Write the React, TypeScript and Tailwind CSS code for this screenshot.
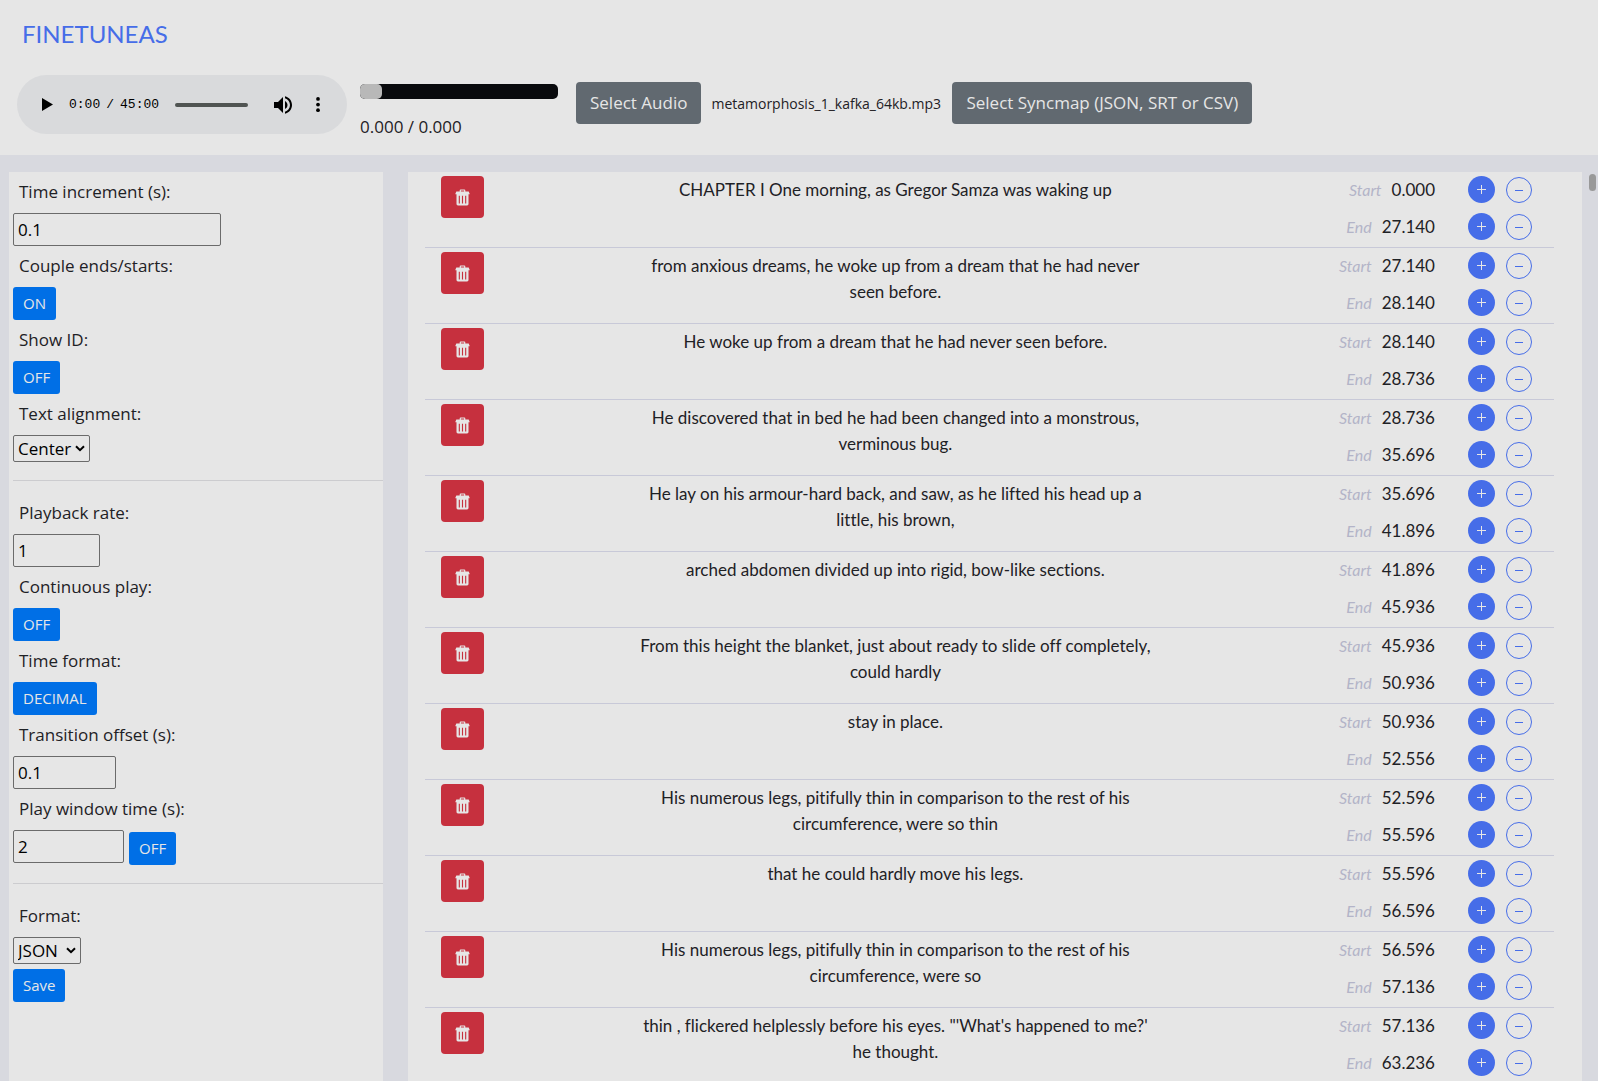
import { useState } from "react";

const rows = [
  { text: "CHAPTER I One morning, as Gregor Samza was waking up", start: "0.000", end: "27.140" },
  { text: "from anxious dreams, he woke up from a dream that he had never seen before.", start: "27.140", end: "28.140" },
  { text: "He woke up from a dream that he had never seen before.", start: "28.140", end: "28.736" },
  { text: "He discovered that in bed he had been changed into a monstrous, verminous bug.", start: "28.736", end: "35.696" },
  { text: "He lay on his armour-hard back, and saw, as he lifted his head up a little, his brown,", start: "35.696", end: "41.896" },
  { text: "arched abdomen divided up into rigid, bow-like sections.", start: "41.896", end: "45.936" },
  { text: "From this height the blanket, just about ready to slide off completely, could hardly", start: "45.936", end: "50.936" },
  { text: "stay in place.", start: "50.936", end: "52.556" },
  { text: "His numerous legs, pitifully thin in comparison to the rest of his circumference, were so thin", start: "52.596", end: "55.596" },
  { text: "that he could hardly move his legs.", start: "55.596", end: "56.596" },
  { text: "His numerous legs, pitifully thin in comparison to the rest of his circumference, were so", start: "56.596", end: "57.136" },
  { text: "thin , flickered helplessly before his eyes. \"'What's happened to me?' he thought.", start: "57.136", end: "63.236" },
];

const labelClass = "block h-[41px] pt-[6px] pl-[6px] leading-[27px]";
const inputClass = "block h-[33px] rounded-[2px] border border-[#6b6b6b] bg-transparent px-1 text-black outline-none";
const buttonClass = "block h-[33px] rounded-[3px] bg-[#006fe6] px-[10px] text-[15px] text-[#e6e6e6]";
const fileButtonClass = "h-[42px] rounded bg-[#616970] px-[14px] text-[17px] text-[#e6e6e6]";

const TrashIcon = () => (
  <svg viewBox="0 0 16 18" className="h-[17px] w-[15px]" fill="currentColor" aria-hidden="true">
    <path
      fillRule="evenodd"
      d="M5 2.5V1.4Q5 .5 6 .5h4q1 0 1 .9v1.1h3.6l1 2.4v.6H.4v-.6l1-2.400zM6.300 2.500h3.400V1.600H6.300zM1.600 5.500h12.800V16q0 1.500-1.500 1.500H3.100Q1.600 17.500 1.600 16zM4 7v8.500h1.200V7zm3.400 0v8.500h1.200V7zm3.400 0v8.500H12V7z"
    />
  </svg>
);

const Select = ({ id, options, className }: { id: string; options: string[]; className: string }) => (
  <div className={`relative ${className}`}>
    <select
      id={id}
      className="block h-[27px] w-full appearance-none rounded-[2px] border border-[#6b6b6b] bg-transparent pl-1 text-black outline-none"
    >
      {options.map((o) => (
        <option key={o}>{o}</option>
      ))}
    </select>
    <svg viewBox="0 0 10 7" className="pointer-events-none absolute top-[10px] right-[5px] h-[7px] w-[10px]" fill="none">
      <path d="M1 1.200l4 4 4-4" stroke="#000" strokeWidth="2" />
    </svg>
  </div>
);

const Toggle = ({ id, on = "ON", off = "OFF", initial = false }: { id: string; on?: string; off?: string; initial?: boolean }) => {
  const [active, setActive] = useState(initial);
  return (
    <button id={id} className={buttonClass} onClick={() => setActive(!active)}>
      {active ? on : off}
    </button>
  );
};

const AudioPlayer = () => (
  <div className="flex h-[59px] w-[330px] items-center rounded-full bg-[#d9dadc] pr-[25px] pl-[25px] text-black">
    <button aria-label="Play">
      <svg viewBox="0 0 11 13" className="h-[13px] w-[11px]">
        <path d="M0 0l11 6.500L0 13z" />
      </svg>
    </button>
    <div className="ml-4 flex gap-[6px] font-['Liberation_Mono',monospace] text-[13px]">
      <span>0:00</span>
      <span>/</span>
      <span>45:00</span>
    </div>
    <div className="ml-4 h-1 flex-1 rounded-full bg-[#505452]" />
    <button aria-label="Mute" className="ml-[26px]">
      <svg viewBox="3 3 18 18" className="h-[18px] w-[18px]">
        <path d="M3 9v6h4l5 5V4L7 9H3zm13.500 3c0-1.770-1.020-3.290-2.500-4.030v8.050c1.480-.73 2.500-2.250 2.500-4.020zM14 3.230v2.060c2.890.86 5 3.540 5 6.710s-2.110 5.850-5 6.710v2.060c4.010-.91 7-4.490 7-8.770s-2.990-7.860-7-8.770z" />
      </svg>
    </button>
    <button aria-label="More options" className="ml-[22px]">
      <svg viewBox="0 0 4 16" className="h-[15px] w-[8px]">
        <circle cx="2" cy="2" r="2" />
        <circle cx="2" cy="8" r="2" />
        <circle cx="2" cy="14" r="2" />
      </svg>
    </button>
  </div>
);

const TimeLine = ({ label, value }: { label: string; value: string }) => (
  <div className="flex h-[27px] items-center">
    <span className="ml-auto text-[16px] text-[#b3b4c8] italic">{label}</span>
    <span className="ml-[10px]">{value}</span>
    <button
      aria-label={`Increase ${label}`}
      className="ml-[33px] flex h-[27px] w-[27px] items-center justify-center rounded-full bg-[#466de8]"
    >
      <svg viewBox="0 0 9 9" className="h-[9px] w-[9px]" stroke="#e6e6e6">
        <path d="M4.500 0v9M0 4.500h9" />
      </svg>
    </button>
    <button
      aria-label={`Decrease ${label}`}
      className="ml-[11px] flex h-[26px] w-[26px] items-center justify-center rounded-full border border-[#466de8]"
    >
      <svg viewBox="0 0 8 4" className="h-[4px] w-[8px]" stroke="#466de8">
        <path d="M0 2.500h8" />
      </svg>
    </button>
  </div>
);

const Header = () => (
  <header className="h-[155px] shrink-0 bg-[#e6e6e6]">
    <h1 className="pt-[16px] pl-[22px] font-['Lato',sans-serif] text-[24px] leading-[36px] text-[#466de8]">FINETUNEAS</h1>
    <div className="mt-[23px] flex items-start pl-[17px]">
      <AudioPlayer />
      <div className="ml-[13px] w-[198px] pt-[9px]">
        <div className="h-[15px] rounded-[5px] bg-[#090a0d]">
          <div className="h-full w-[22px] rounded-[5px] bg-[#b8b8b8]" />
        </div>
        <p className="mt-[14px] leading-[27px]">0.000 / 0.000</p>
      </div>
      <div className="ml-[18px] flex items-center pt-[7px]">
        <button className={fileButtonClass}>Select Audio</button>
        <span className="mr-[6px] ml-[10px] w-[235px] text-[14px] whitespace-nowrap">metamorphosis_1_kafka_64kb.mp3</span>
        <button className={fileButtonClass}>Select Syncmap (JSON, SRT or CSV)</button>
      </div>
    </div>
  </header>
);

const Sidebar = () => (
  <aside className="w-[374px] shrink-0 bg-[#e6e6e6] pl-1">
    <label htmlFor="increment" className={labelClass}>Time increment (s):</label>
    <input id="increment" defaultValue="0.1" className={`${inputClass} w-[208px]`} />
    <label htmlFor="couple" className={labelClass}>Couple ends/starts:</label>
    <Toggle id="couple" initial />
    <label htmlFor="show-id" className={labelClass}>Show ID:</label>
    <Toggle id="show-id" />
    <label htmlFor="alignment" className={labelClass}>Text alignment:</label>
    <Select id="alignment" options={["Center", "Left", "Right"]} className="w-[77px]" />

    <hr className="mt-[18px] mb-3 border-[#cccccf]" />

    <label htmlFor="rate" className={labelClass}>Playback rate:</label>
    <input id="rate" defaultValue="1" className={`${inputClass} w-[87px]`} />
    <label htmlFor="continuous" className={labelClass}>Continuous play:</label>
    <Toggle id="continuous" />
    <label htmlFor="time-format" className={labelClass}>Time format:</label>
    <Toggle id="time-format" on="HH:MM:SS" off="DECIMAL" />
    <label htmlFor="offset" className={labelClass}>Transition offset (s):</label>
    <input id="offset" defaultValue="0.1" className={`${inputClass} w-[103px]`} />
    <label htmlFor="window-time" className={labelClass}>Play window time (s):</label>
    <div className="flex h-[35px] gap-[5px]">
      <input id="window-time" defaultValue="2" className={`${inputClass} w-[111px]`} />
      <div className="self-end">
        <Toggle id="window-toggle" />
      </div>
    </div>

    <hr className="mt-[18px] mb-3 border-[#cccccf]" />

    <label htmlFor="format" className={labelClass}>Format:</label>
    <Select id="format" options={["JSON", "SRT", "CSV"]} className="w-[68px]" />
    <button className={`${buttonClass} mt-[5px]`}>Save</button>
  </aside>
);

const App = () => (
  <div className="flex h-screen flex-col overflow-hidden bg-[#d8d9df] font-['Open_Sans',sans-serif] text-[17px] text-[#1e2125]">
    <Header />
    <main className="relative flex min-h-0 flex-1 gap-[25px] overflow-hidden pt-[17px] pr-[16px] pl-[9px]">
      <Sidebar />
      <section className="flex-1 overflow-hidden bg-[#e6e6e6] pr-[28px] pl-[17px]">
        <table className="w-full table-fixed border-separate border-spacing-0 font-['Lato',sans-serif] leading-[26px] [font-variant-ligatures:none]">
          <tbody>
            {rows.map((row) => (
              <tr key={row.start}>
                <td className="h-[76px] w-1/12 border-b border-[#c8c9d8] pt-1 pl-4 align-top">
                  <button aria-label="Delete" className="flex h-[42px] w-[43px] items-center justify-center rounded bg-[#c6303e] text-[#e6e6e6]">
                    <TrashIcon />
                  </button>
                </td>
                <td className="w-2/3 border-b border-[#c8c9d8] pt-[5px] text-center align-top">
                  <p className="mx-auto max-w-[520px]">{row.text}</p>
                </td>
                <td className="w-1/4 border-b border-[#c8c9d8] pt-1 pr-[22px] align-top">
                  <div className="flex flex-col gap-[10px]">
                    <TimeLine label="Start" value={row.start} />
                    <TimeLine label="End" value={row.end} />
                  </div>
                </td>
              </tr>
            ))}
          </tbody>
        </table>
      </section>
      {/* Scroll thumb */}
      <div className="absolute top-[19px] right-[2px] h-[17px] w-[7px] rounded-full bg-[#999999]" />
    </main>
  </div>
);

export default App;
